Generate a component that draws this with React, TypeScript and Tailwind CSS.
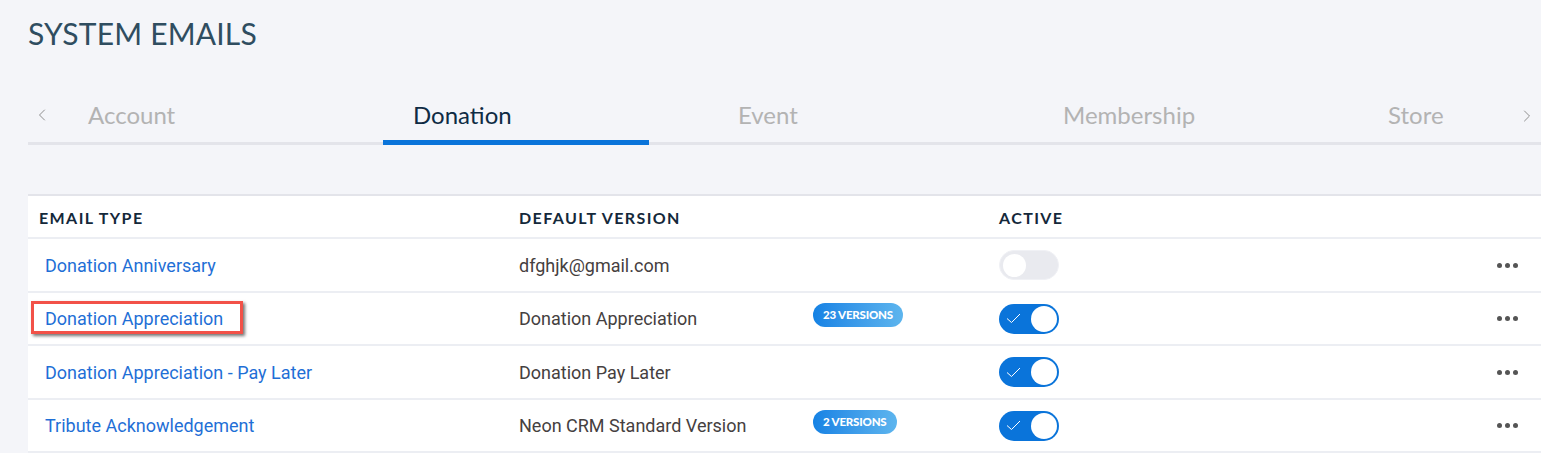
import { ChevronLeft, ChevronRight } from "lucide-react";

const tabs = ["Account", "Donation", "Event", "Membership", "Store"];

const rows = [
  { type: "Donation Anniversary", version: "dfghjk@gmail.com", badge: "", active: false },
  { type: "Donation Appreciation", version: "Donation Appreciation", badge: "23 Versions", active: true, marked: true },
  { type: "Donation Appreciation - Pay Later", version: "Donation Pay Later", badge: "", active: true },
  { type: "Tribute Acknowledgement", version: "Neon CRM Standard Version", badge: "2 Versions", active: true },
];

function Toggle({ on }: { on: boolean }) {
  if (!on) {
    return (
      <div className="w-[60px] h-[30px] rounded-full bg-[#e9eaef] border border-[#f0f1f5] flex items-center px-[1px]">
        <div className="w-[23px] h-[23px] rounded-full bg-white ml-[2px]" />
      </div>
    );
  }
  return (
    <div className="w-[60px] h-[30px] rounded-full bg-[#0a74da] flex items-center justify-between pl-[7px] pr-[2px]">
      <svg width="15" height="11" viewBox="0 0 15 11" fill="none">
        <path d="M1 5.5 L5.5 9.5 L14 1" stroke="white" strokeWidth="1" />
      </svg>
      <div className="w-[26px] h-[26px] rounded-full bg-white" />
    </div>
  );
}

export default function App() {
  return (
    <div className="min-h-[453px] bg-[#f4f5f9] pl-[28px] font-['Lato',sans-serif] overflow-hidden">
      {/* Title */}
      <h1 className="pt-[15px] text-[30px] leading-[36px] text-[#2f4d60] tracking-[0.2px]">SYSTEM EMAILS</h1>

      {/* Tabs */}
      <div className="mt-[31px] relative flex items-end h-[63px] border-b-[3px] border-[#e3e4ea] overflow-visible">
        <div className="w-[28px] shrink-0 h-full flex items-center justify-center pt-[6px] text-[#8f8f8f]">
          <ChevronLeft size={20} strokeWidth={1.2} />
        </div>
        {tabs.map((t) => {
          const active = t === "Donation";
          return (
            <div key={t} className="w-[325px] h-full shrink-0 relative">
              <div
                className={`w-[266px] ml-[2px] h-[calc(100%+3px)] pl-[30px] pt-[18px] text-[24px] leading-[30px] ${
                  active ? "text-[#0e2b44] border-b-[5px] border-[#0a74da]" : "text-[#b3b3b3]"
                }`}
              >
                {t}
              </div>
            </div>
          );
        })}
        <div className="absolute right-[4px] top-[24px] text-[#8f8f8f]">
          <ChevronRight size={20} strokeWidth={1.2} />
        </div>
      </div>

      {/* Table */}
      <div className="mt-[49px] bg-white border-t-2 border-[#e3e4ea]">
        <div className="grid grid-cols-[491px_480px_1fr] h-[43px] items-center pt-[3px] border-b-2 border-[#eceef3] text-[16px] font-bold tracking-[1.4px] text-[#14283a]">
          <div className="pl-[11px]">EMAIL TYPE</div>
          <div>DEFAULT VERSION</div>
          <div>ACTIVE</div>
        </div>
        {rows.map((r) => (
          <div
            key={r.type}
            className="grid grid-cols-[491px_480px_1fr] h-[53.5px] items-center pt-[1px] border-b-2 border-[#eceef3] font-['Roboto',sans-serif] text-[18px]"
          >
            <div className="pl-[17px] relative">
              <span className="text-[#1f6fd6]">{r.type}</span>
              {r.marked && (
                <div className="absolute left-[3px] top-[-4px] w-[212px] h-[33px] border-[3px] border-[#f25148] shadow-[2px_2px_3px_rgba(0,0,0,0.55)]" />
              )}
            </div>
            <div className="flex items-center">
              <span className="w-[294px] text-[#454040]">{r.version}</span>
              {r.badge && (
                <span className="mb-[8px] h-[24px] px-[10px] rounded-full bg-gradient-to-r from-[#1482e4] to-[#5db5ee] text-white text-[11.5px] font-black font-['Lato',sans-serif] uppercase flex items-center tracking-[-0.2px]">
                  {r.badge}
                </span>
              )}
            </div>
            <div className="flex items-center justify-between pr-[23px]">
              <Toggle on={r.active} />
              <div className="flex gap-[3px]">
                <span className="w-[5px] h-[5px] rounded-full bg-[#555]" />
                <span className="w-[5px] h-[5px] rounded-full bg-[#555]" />
                <span className="w-[5px] h-[5px] rounded-full bg-[#555]" />
              </div>
            </div>
          </div>
        ))}
      </div>
    </div>
  );
}
